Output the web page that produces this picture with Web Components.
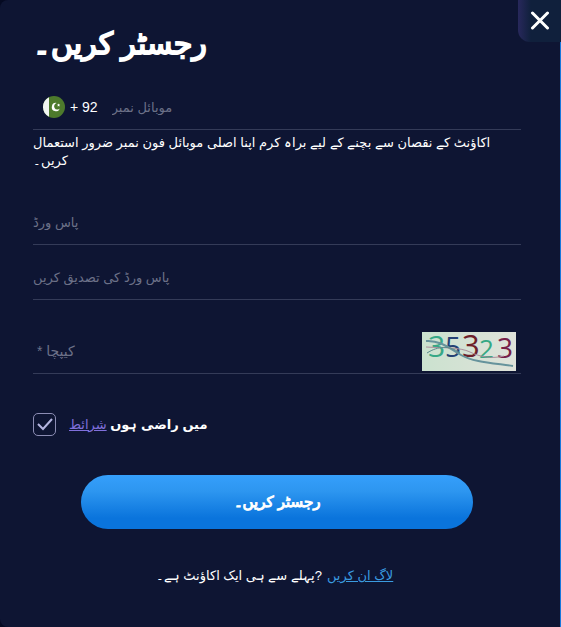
<!DOCTYPE html>
<html lang="ur">
<head>
<meta charset="utf-8">
<title>رجسٹر کریں۔</title>
<style>
  body {
    margin: 0;
    background: #050a22;
    font-family: "Liberation Sans", "DejaVu Sans", sans-serif;
    color: #fff;
  }
</style>
</head>
<body>
<register-dialog></register-dialog>

<script>
class CloseButton extends HTMLElement {
  constructor() {
    super();
    this._root = this.attachShadow({mode: 'open'});
  }

  connectedCallback() {
    this._root.innerHTML = `
        <style>
        :host {
            display: block;
        }

        button {
            display: flex;
            align-items: center;
            justify-content: center;
            width: 43px;
            height: 42px;
            padding: 0;
            border: 0;
            border-radius: 0 0 0 12px;
            background: linear-gradient(90deg, #28285c, #10203c 30%);
            color: #fff;
        }
        </style>
        <button type="button" aria-label="close">
            <svg width="20" height="20" viewBox="0 0 20 20" fill="none" stroke="currentColor" stroke-width="3" stroke-linecap="round">
                <path d="M2.5 2 17.5 17M17.5 2 2.5 17"/>
            </svg>
        </button>
        `;
  }
}

class FormField extends HTMLElement {
  constructor() {
    super();
    this._root = this.attachShadow({mode: 'open'});
  }

  connectedCallback() {
    this._root.innerHTML = `
        <style>
        :host {
            display: block;
            font-size: 13px;
        }

        .row {
            display: flex;
            align-items: center;
            height: 44px;
            border-bottom: 1px solid #343b58;
        }

        input {
            flex: 1;
            min-width: 0;
            height: 24px;
            padding: 0;
            border: 0;
            outline: 0;
            background: none;
            color: #fff;
            font: inherit;
        }

        input::placeholder {
            color: #6c7188;
            opacity: 1;
        }
        </style>
        <div class="row">
            <slot name="before"></slot>
            <input>
            <slot name="after"></slot>
        </div>
        `;

    const input = this._root.querySelector("input");
    input.type = this.getAttribute("type") || "text";
    input.placeholder = this.getAttribute("label");
    input.setAttribute("aria-label", this.getAttribute("label"));
  }
}

class CountryCode extends HTMLElement {
  constructor() {
    super();
    this._root = this.attachShadow({mode: 'open'});
  }

  connectedCallback() {
    this._root.innerHTML = `
        <style>
        :host {
            display: block;
        }

        button {
            display: flex;
            align-items: center;
            gap: 5px;
            padding: 0 14px 0 10px;
            border: 0;
            background: none;
            color: #fff;
            font: inherit;
            font-size: 14px;
        }
        </style>
        <button type="button">
            <svg width="22" height="22" viewBox="0 0 22 22" aria-hidden="true">
                <circle cx="11" cy="11" r="11" fill="#4d7a2c"/>
                <path d="M6 1.2A11 11 0 0 0 6 20.8Z" fill="#f2f6f2"/>
                <path d="M16.9 12.6A4.2 4.2 0 1 1 13.6 6.9 3.4 3.4 0 1 0 16.9 12.6Z" fill="#fff"/>
                <path d="m15.6 7.4.5 1 1.1.1-.8.8.2 1.1-1-.5-1 .5.2-1.1-.8-.8 1.1-.1Z" fill="#fff"/>
            </svg>
            <slot></slot>
        </button>
        `;
  }
}

class CaptchaImage extends HTMLElement {
  constructor() {
    super();
    this._root = this.attachShadow({mode: 'open'});
  }

  connectedCallback() {
    this._root.innerHTML = `
        <style>
        :host {
            display: block;
            margin-right: 5px;
        }

        svg {
            display: block;
            overflow: visible;
            font-family: "Open Sans", sans-serif;
        }
        </style>
        <svg width="94" height="39" viewBox="0 0 94 39">
            <defs>
                <linearGradient id="paper">
                    <stop offset="0" stop-color="#cbe2cf"/>
                    <stop offset="1" stop-color="#dfe2da"/>
                </linearGradient>
            </defs>
            <rect width="94" height="39" fill="url(#paper)"/>
            <text x="6" y="25" font-size="30" fill="#37a886">3</text>
            <text x="23" y="25" font-size="28" fill="#254274">5</text>
            <text x="40" y="25" font-size="31" fill="#6d2028">3</text>
            <text x="57" y="26" font-size="26" fill="#35a884">2</text>
            <text x="75" y="26" font-size="28" fill="#762048">3</text>
            <g fill="none" stroke-width="2">
                <path d="M4 9C18 8 27 16 39 23S70 31 91 34" stroke="#66939c"/>
                <path d="M4 15C20 16 38 15 48 20S70 27 82 24" stroke="#ab8f9c" stroke-width="1"/>
                <path d="M5 21C16 14 28 13 38 21" stroke="#5a8b8b" stroke-width="1"/>
            </g>
        </svg>
        `;
  }
}

class TermsCheck extends HTMLElement {
  constructor() {
    super();
    this._root = this.attachShadow({mode: 'open'});
  }

  connectedCallback() {
    this._root.innerHTML = `
        <style>
        :host {
            display: flex;
            align-items: center;
            gap: 13px;
            font-size: 13px;
        }

        input {
            appearance: none;
            box-sizing: border-box;
            width: 23px;
            height: 23px;
            margin: 0;
            border: 1px solid #8c8db4;
            border-radius: 5px;
        }

        input:checked {
            background: url("data:image/svg+xml,%3Csvg xmlns='http://www.w3.org/2000/svg' viewBox='0 0 21 21'%3E%3Cpath d='M4 10l5 5 9-10' fill='none' stroke='%23b4b5e0' stroke-width='2'/%3E%3C/svg%3E") center / 21px no-repeat;
        }

        label {
            font-weight: bold;
        }
        </style>
        <input type="checkbox" id="agree" checked>
        <label for="agree"><slot></slot></label>
        `;
  }
}

class SubmitButton extends HTMLElement {
  constructor() {
    super();
    this._root = this.attachShadow({mode: 'open'});
  }

  connectedCallback() {
    this._root.innerHTML = `
        <style>
        :host {
            display: block;
        }

        button {
            width: 100%;
            height: 54px;
            border: 0;
            border-radius: 27px;
            background: linear-gradient(#359ffb, #2d96f0 30%, #0a74dc 80%);
            color: #fff;
            font: inherit;
            font-size: 15px;
            -webkit-text-stroke: 1px;
        }
        </style>
        <button type="button"><slot></slot></button>
        `;
  }
}

class RegisterDialog extends HTMLElement {
  constructor() {
    super();
    this._root = this.attachShadow({mode: 'open'});
  }

  connectedCallback() {
    this._root.innerHTML = `
        <style>
        :host {
            display: block;
            position: relative;
            box-sizing: border-box;
            min-height: 100vh;
            padding: 24px 39px 34px 33px;
            background: #0e1533;
            border-right: 1px solid #1878dc;
            border-radius: 8px 0 0 8px;
        }

        close-button {
            position: absolute;
            top: 0;
            right: -1px;
        }

        h1 {
            margin: 0 0 21px;
            font-size: 30px;
            font-weight: normal;
            line-height: 40px;
            -webkit-text-stroke: 2px;
        }

        form {
            display: flex;
            flex-direction: column;
        }

        .hint {
            margin: 4px 0 30px;
            font-size: 13px;
            line-height: 18px;
        }

        .password {
            margin-bottom: 10px;
        }

        .captcha {
            margin: 29px 0 39px;
            font-size: 14px;
        }

        terms-check a {
            color: #8070dc;
            font-weight: normal;
        }

        submit-button {
            margin: 39px 48px 38px;
        }

        .login {
            display: flex;
            justify-content: center;
            gap: 5px;
            margin: 0;
            padding-right: 5px;
            font-size: 13px;
            line-height: 18px;
        }

        .login a {
            color: #3a9be0;
        }
        </style>
        <close-button></close-button>
        <h1>رجسٹر کریں۔</h1>
        <form>
            <form-field type="tel" label="موبائل نمبر">
                <country-code slot="before">+ 92</country-code>
            </form-field>
            <p class="hint">اکاؤنٹ کے نقصان سے بچنے کے لیے براہ کرم اپنا اصلی موبائل فون نمبر ضرور استعمال کریں۔</p>
            <form-field class="password" type="password" label="پاس ورڈ"></form-field>
            <form-field type="password" label="پاس ورڈ کی تصدیق کریں"></form-field>
            <form-field class="captcha" label=" * کیپچا">
                <captcha-image slot="after"></captcha-image>
            </form-field>
            <terms-check>میں راضی ہوں <a href="#">شرائط</a></terms-check>
            <submit-button>رجسٹر کریں۔</submit-button>
            <p class="login"><span>پہلے سے ہی ایک اکاؤنٹ ہے۔?</span><a href="#">لاگ ان کریں</a></p>
        </form>
        `;
  }
}

window.customElements.define("close-button", CloseButton);
window.customElements.define("form-field", FormField);
window.customElements.define("country-code", CountryCode);
window.customElements.define("captcha-image", CaptchaImage);
window.customElements.define("terms-check", TermsCheck);
window.customElements.define("submit-button", SubmitButton);
window.customElements.define("register-dialog", RegisterDialog);
</script>
</body>
</html>
